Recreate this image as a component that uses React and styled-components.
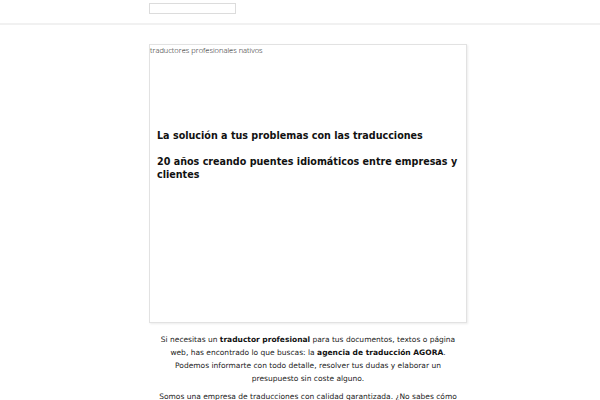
import React from "react";
import styled, { createGlobalStyle } from "styled-components";

const Global = createGlobalStyle`
  html, body { margin: 0; padding: 0; background: #fff; }
  body { font-family: "DejaVu Sans", sans-serif; color: #222; }
`;

const Header = styled.header`
  height: 25px;
  border-bottom: 2px solid #f1f1f1;
  padding-top: 3px;
  box-sizing: border-box;
`;

const Wrap = styled.div`
  margin-left: 149px;
  width: 318px;
`;

const Search = styled.input`
  display: block;
  width: 87px;
  height: 11px;
  box-sizing: border-box;
  border: 1px solid #dcdcdc;
  background: #fff;
  padding: 0;
  outline: none;
`;

const Main = styled.main`
  padding-top: 19px;
`;

const Hero = styled.section`
  height: 279px;
  box-sizing: border-box;
  border: 1px solid #e2e2e2;
  box-shadow: 1px 1px 2px rgba(0, 0, 0, 0.08);
`;

const Tagline = styled.div`
  font-family: "Open Sans", sans-serif;
  font-weight: 300;
  font-size: 7.5px;
  line-height: 10px;
  color: #111;
`;

const Headings = styled.div`
  padding: 74px 4px 0 7px;
`;

const Title = styled.h2`
  font-family: "DejaVu Sans", sans-serif;
  font-weight: bold;
  font-size: 9.6px;
  line-height: 13px;
  color: #111;
  margin: 0 0 13px;
`;

const Intro = styled.div`
  padding: 10px 8px 0;
  text-align: center;
`;

const Para = styled.p`
  font-size: 7.5px;
  line-height: 13px;
  margin: 0 0 5px;
  color: #222;
  b { color: #111; }
`;

export default function App() {
  return (
    <>
      <Global />
      <Header>
        <Wrap>
          <Search type="text" aria-label="buscar" />
        </Wrap>
      </Header>
      <Main>
        <Wrap>
          <Hero>
            <Tagline>traductores profesionales nativos</Tagline>
            <Headings>
              <Title>La solución a tus problemas con las traducciones</Title>
              <Title>20 años creando puentes idiomáticos entre empresas y clientes</Title>
            </Headings>
          </Hero>
          <Intro>
            <Para>
              Si necesitas un <b>traductor profesional</b> para tus documentos, textos o página web, has encontrado lo que buscas: la <b>agencia de traducción AGORA</b>. Podemos informarte con todo detalle, resolver tus dudas y elaborar un presupuesto sin coste alguno.
            </Para>
            <Para>
              Somos una empresa de traducciones con calidad garantizada. ¿No sabes cómo empezar? Cuéntanos qué necesitas y te ayudaremos.
            </Para>
          </Intro>
        </Wrap>
      </Main>
    </>
  );
}
